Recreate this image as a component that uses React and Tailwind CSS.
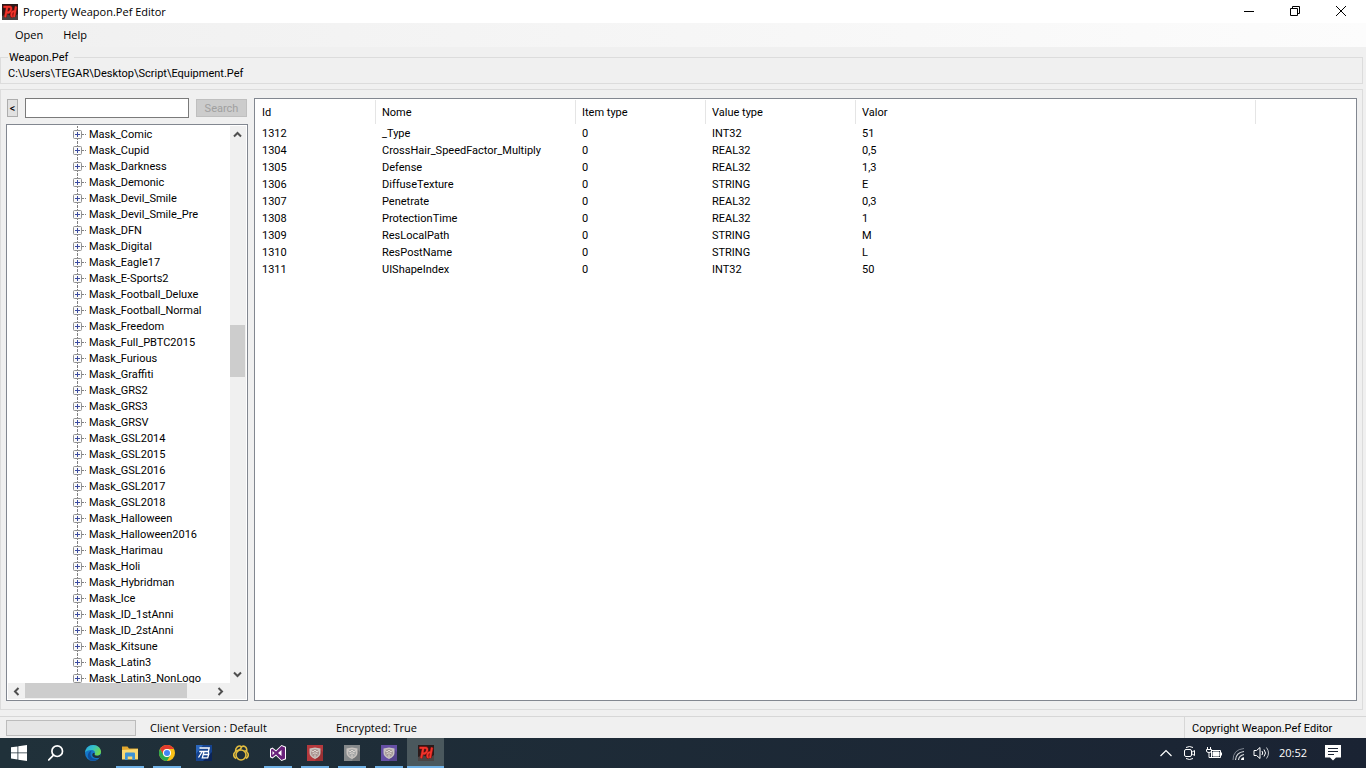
import { useState } from 'react';

const TREE_ITEMS = [
  'Mask_Comic', 'Mask_Cupid', 'Mask_Darkness', 'Mask_Demonic', 'Mask_Devil_Smile',
  'Mask_Devil_Smile_Pre', 'Mask_DFN', 'Mask_Digital', 'Mask_Eagle17', 'Mask_E-Sports2',
  'Mask_Football_Deluxe', 'Mask_Football_Normal', 'Mask_Freedom', 'Mask_Full_PBTC2015',
  'Mask_Furious', 'Mask_Graffiti', 'Mask_GRS2', 'Mask_GRS3', 'Mask_GRSV', 'Mask_GSL2014',
  'Mask_GSL2015', 'Mask_GSL2016', 'Mask_GSL2017', 'Mask_GSL2018', 'Mask_Halloween',
  'Mask_Halloween2016', 'Mask_Harimau', 'Mask_Holi', 'Mask_Hybridman', 'Mask_Ice',
  'Mask_ID_1stAnni', 'Mask_ID_2stAnni', 'Mask_Kitsune', 'Mask_Latin3', 'Mask_Latin3_NonLogo',
];

const ROWS = [
  ['1312', '_Type', '0', 'INT32', '51'],
  ['1304', 'CrossHair_SpeedFactor_Multiply', '0', 'REAL32', '0,5'],
  ['1305', 'Defense', '0', 'REAL32', '1,3'],
  ['1306', 'DiffuseTexture', '0', 'STRING', 'E'],
  ['1307', 'Penetrate', '0', 'REAL32', '0,3'],
  ['1308', 'ProtectionTime', '0', 'REAL32', '1'],
  ['1309', 'ResLocalPath', '0', 'STRING', 'M'],
  ['1310', 'ResPostName', '0', 'STRING', 'L'],
  ['1311', 'UIShapeIndex', '0', 'INT32', '50'],
];

function AppLogo() {
  return (
    <svg viewBox="0 0 16 16" className="size-4 shrink-0">
      <rect width="16" height="16" fill="#2b1a1a" />
      <path d="M0 12l5-2 6 3 5-3v6H0z" fill="#4a4444" />
      <path d="M1.500 2.800h6q2 0 1.600 2.600T6.500 8.500H5M5.200 3.500L3.200 13.200M14 2.500l-2 10.500M12.500 7.500q-2.500-.5-3 2.300t1.200 2.700" fill="none" stroke="#8c1210" strokeWidth="3" />
      <path d="M1.500 2.800h6q2 0 1.600 2.600T6.500 8.500H5M5.200 3.500L3.200 13.200M14 2.500l-2 10.500M12.500 7.500q-2.500-.5-3 2.300t1.200 2.700" fill="none" stroke="#f0352c" strokeWidth="1.800" />
    </svg>
  );
}

function Chevron({ className }) {
  return (
    <svg viewBox="0 0 9 9" className={`size-[9px] ${className}`}>
      <path d="M1 6.500L4.500 3L8 6.500" fill="none" stroke="#505050" strokeWidth="2" />
    </svg>
  );
}

function TitleBar() {
  const btn = 'flex h-[21px] w-[46px] items-center justify-center hover:bg-black/10';
  return (
    <header className="flex h-[23px] shrink-0 bg-white pr-[2px]">
      <div className="flex flex-1 items-center gap-[5px] pl-[2px]">
        <AppLogo />
        <h1 className="text-[11px] leading-4">Property Weapon.Pef Editor</h1>
      </div>
      <button className={btn} aria-label="Minimize">
        <svg viewBox="0 0 10 10" className="size-[10px]"><path d="M0 5.500h10" stroke="#000" /></svg>
      </button>
      <button className={btn} aria-label="Restore">
        <svg viewBox="0 0 10 10" className="size-[10px]">
          <path d="M.5 2.500h7v7h-7zM2.500 2V.5h7v7H8" fill="none" stroke="#000" />
        </svg>
      </button>
      <button className={btn} aria-label="Close">
        <svg viewBox="0 0 10 10" className="size-[10px]"><path d="M0 0l10 10M10 0L0 10" stroke="#000" /></svg>
      </button>
    </header>
  );
}

function TreeView() {
  return (
    <div className="flex min-h-0 flex-1 flex-col border border-[#828790] bg-white p-px">
      <div className="flex min-h-0 flex-1">
        <ul className="min-w-0 flex-1 overflow-hidden pl-[65px]">
          {TREE_ITEMS.map((name) => (
            <li key={name} className="flex h-4 items-center">
              <button className="flex h-4 w-[9px] flex-col items-center" aria-label={`Expand ${name}`}>
                <span className="w-px flex-1 border-l border-dotted border-[#808080]" />
                <svg viewBox="0 0 9 9" className="size-[9px] shrink-0">
                  <rect x=".5" y=".5" width="8" height="8" rx="1" fill="#fafafa" stroke="#919191" />
                  <path d="M2 4.500h5M4.500 2v5" stroke="#3a4aa0" />
                </svg>
                <span className="w-px flex-1 border-l border-dotted border-[#808080]" />
              </button>
              <span className="w-[4px] border-t border-dotted border-[#808080]" />
              <span className="pt-[2px] pl-[3px] whitespace-nowrap">{name}</span>
            </li>
          ))}
        </ul>
        <div className="flex w-[15px] flex-col items-center bg-[#f0f0f0]">
          <button className="flex h-[17px] w-full items-center justify-center" aria-label="Scroll up"><Chevron /></button>
          <div className="flex w-full flex-1 flex-col">
            <div className="grow-[182]" />
            <div className="h-[52px] bg-[#cdcdcd]" />
            <div className="grow-[288]" />
          </div>
          <button className="flex h-[17px] w-full items-center justify-center" aria-label="Scroll down"><Chevron className="rotate-180" /></button>
        </div>
        <div className="w-px bg-[#f0f0f0]" />
      </div>
      <div className="flex h-4 shrink-0 items-stretch bg-[#f0f0f0]">
        <button className="flex w-[17px] items-center justify-center" aria-label="Scroll left"><Chevron className="-rotate-90" /></button>
        <div className="flex-1"><div className="h-[15px] w-[162px] bg-[#cdcdcd]" /></div>
        <button className="flex w-[17px] items-center justify-center" aria-label="Scroll right"><Chevron className="rotate-90" /></button>
        <div className="w-[17px]" />
      </div>
    </div>
  );
}

function PropertyTable() {
  return (
    <div className="min-w-0 flex-1 border border-[#828790] bg-white p-px">
      <table className="w-full table-fixed border-separate border-spacing-0 text-left">
        <colgroup>
          <col className="w-[120px]" />
          <col className="w-[200px]" />
          <col className="w-[130px]" />
          <col className="w-[150px]" />
          <col className="w-[400px]" />
          <col />
        </colgroup>
        <thead>
          <tr className="h-6">
            {['Id', 'Nome', 'Item type', 'Value type', 'Valor'].map((h) => (
              <th key={h} className="border-r border-[#e5e5e5] p-0 pt-[2px] pl-[6px] font-normal">{h}</th>
            ))}
            <td />
          </tr>
        </thead>
        <tbody>
          {ROWS.map((row) => (
            <tr key={row[0]} className="h-[17px]">
              {row.map((cell, i) => (
                <td key={i} className="p-0 pt-[2px] pl-[6px] whitespace-nowrap">{cell}</td>
              ))}
              <td />
            </tr>
          ))}
        </tbody>
      </table>
    </div>
  );
}

function ShieldIcon({ bg, crest }) {
  return (
    <svg viewBox="0 0 16 16" className="size-4">
      <rect width="16" height="16" fill={bg} />
      <path d="M13 4l3 3v9H8z" fill="#000" opacity=".15" />
      <path d="M8 2.500l5.500 1v4.500q0 3.500-5.500 6Q2.500 11.500 2.500 8V3.500z" fill="#c9c4c0" />
      <path d="M8 4l4 1v3q0 2.500-4 4.500-4-2-4-4.500V5z" fill={crest} />
      <path d="M4 5.500l2 1.500 2-2 2 2 2-1.500M5.500 9l1.500-1h2l1.500 1M8 9.500v2.500" fill="none" stroke="#e4ded8" strokeWidth=".9" />
    </svg>
  );
}

const TASKS = [
  {
    name: 'Start',
    icon: (
      <svg viewBox="0 0 16 16" className="size-4" fill="#fff">
        <path d="M0 2.300l6.500-.9v6.100H0zM7.300 1.300L16 0v7.500H7.300zM0 8.300h6.500v6.200L0 13.600zM7.300 8.300H16V16l-8.700-1.300z" />
      </svg>
    ),
  },
  {
    name: 'Search',
    icon: (
      <svg viewBox="0 0 16 16" className="size-4" fill="none" stroke="#fff" strokeWidth="1.700">
        <circle cx="9.200" cy="6.200" r="5.300" />
        <path d="M5.500 10.200L.2 15.500" />
      </svg>
    ),
  },
  {
    name: 'Microsoft Edge',
    icon: (
      <svg viewBox="0 0 16 16" className="size-4">
        <defs>
          <linearGradient id="edge-top" x1="0" y1="0" x2="1" y2=".5">
            <stop offset="0" stopColor="#2aa5dc" />
            <stop offset=".5" stopColor="#35c1c8" />
            <stop offset="1" stopColor="#6fd84f" />
          </linearGradient>
        </defs>
        <circle cx="8" cy="8" r="8" fill="#1476c8" />
        <path d="M.1 7.500C.6 3 4 0 8.100 0 12.700 0 16 3.400 16 6.800c0 2.400-1.700 4-4 4-2 0-2.800-.8-2.400-1.500C11 7 9 4.900 6.300 4.900 3.200 4.900.6 6.200.1 7.500z" fill="url(#edge-top)" />
        <path d="M5.500 8.500c-.6 3.500 2.700 6.500 7.200 5.200C9 17.500 3.500 16 2.800 11.500 2.400 8.500 4.500 6 6.500 6c-.6.700-.9 1.500-1 2.500z" fill="#0f4f9e" />
        <path d="M9.600 9.300c-.4.700.4 1.500 2.400 1.500 1.500 0 3-.7 3.600-1.800.3 1.300-.3 2.600-1.300 3.700C10.500 14 7 12 7.300 9.500c.1-1 .8-1.600 1.400-1.600.9 0 1.300.6.900 1.400z" fill="#20303a" />
      </svg>
    ),
  },
  {
    name: 'File Explorer',
    open: true,
    icon: (
      <svg viewBox="0 0 16 16" className="size-4">
        <path d="M0 1.500h5.500L7 3.500h9V6H0z" fill="#e2a72e" />
        <path d="M0 5l16-1v10.500H0z" fill="#fbd971" />
        <path d="M3 8.500q0-1 1-1h8q1 0 1 1V15h-2.700v-3.500H5.700V15H3z" fill="#3d93d5" />
      </svg>
    ),
  },
  {
    name: 'Google Chrome',
    open: true,
    icon: (
      <svg viewBox="0 0 16 16" className="size-4">
        <circle cx="8" cy="8" r="8" fill="#fbc116" />
        <path d="M1.070 4A8 8 0 0 1 14.930 4H8a4 4 0 0 0-3.460 6z" fill="#e33b2e" />
        <path d="M1.070 4l3.470 6A4 4 0 0 0 8 12l3.460-2L8 16A8 8 0 0 1 1.070 4z" fill="#2da94f" />
        <circle cx="8" cy="8" r="4" fill="#fff" />
        <circle cx="8" cy="8" r="3" fill="#4285f4" />
      </svg>
    ),
  },
  {
    name: 'Point Blank',
    icon: (
      <svg viewBox="0 0 16 16" className="size-4">
        <rect width="16" height="16" fill="#15438f" />
        <path d="M0 0h7L0 9z" fill="#2b67bd" />
        <path d="M16 7v9H7z" fill="#0b2459" />
        <path d="M3.500 3h9.700l-.8 3.500H3.200M6.300 6.500L2.500 12.500M8 6.500l-1.700 6.300h5.400l1-3.300H7.200M12.400 6.500l.3 3" fill="none" stroke="#fff" strokeWidth="1.300" />
      </svg>
    ),
  },
  {
    name: 'Navicat',
    icon: (
      <svg viewBox="0 0 16 16" className="size-4" fill="none" stroke="#e3bd3f" strokeWidth="1.600">
        <circle cx="8" cy="10" r="5" />
        <path d="M3 13.500Q0 12 1 8.500 2 6 5 5.200 8 4.500 8.500 1.800 6.500.200 4.200 2 2.200 3.800 2.800 6.500M13 13.500q3-1.500 2-5Q14 6 11.500 5.500M8.500 1.800Q11 .200 13 2.500q1.300 2 .300 4.500" />
      </svg>
    ),
  },
  {
    name: 'Visual Studio',
    open: true,
    icon: (
      <svg viewBox="0 0 16 16" className="size-4">
        <path d="M11.500 0L16 1.800v12.400L11.500 16 6 10.700 2.500 13.500 0 12.300V3.700l2.500-1.200L6 5.300z" fill="#fff" />
        <path d="M11.500 1L15 2.500v11L11.500 15 6 9.500l-3.500 2.800L1 11.500v-7l1.500-.8L6 6.500zM11.500 5L8 8l3.500 3zM2.500 6v4l2-2z" fill="#68217a" fillRule="evenodd" />
      </svg>
    ),
  },
  { name: 'Launcher', open: true, icon: <ShieldIcon bg="#b5393d" crest="#a8928f" /> },
  { name: 'Server', open: true, icon: <ShieldIcon bg="#85898b" crest="#a3a5a5" /> },
  { name: 'Auth', open: true, icon: <ShieldIcon bg="#6650a5" crest="#a59a98" /> },
  { name: 'Property Weapon.Pef Editor', open: true, active: true, icon: <AppLogo /> },
];

function Taskbar() {
  return (
    <footer className="flex h-[30px] shrink-0 justify-between bg-linear-to-r from-[#20313a] to-[#1a2333] text-white">
      <nav className="flex" aria-label="Taskbar">
        {TASKS.map(({ name, open, active, icon }) => (
          <button
            key={name}
            aria-label={name}
            className={`flex w-[37px] flex-col items-center pt-[2px] ${active ? 'bg-[#4a585d]' : 'hover:bg-white/10'}`}
          >
            <span className="flex flex-1 items-center">{icon}</span>
            <span className={`h-[2px] ${open ? 'bg-[#6fb1e6]' : ''} ${active ? 'w-full' : 'w-7'}`} />
          </button>
        ))}
      </nav>
      <div className="flex items-center pr-[25px]">
        <button className="mr-[12px]" aria-label="Show hidden icons">
          <svg viewBox="0 0 12 8" className="h-2 w-3"><path d="M.5 7L6 1.500 11.500 7" fill="none" stroke="#fff" strokeWidth="1.200" /></svg>
        </button>
        <button className="mr-[10px]" aria-label="Meet Now">
          <svg viewBox="0 0 12 16" className="h-4 w-3" fill="none" stroke="#fff">
            <rect x=".5" y="4.500" width="7" height="7" rx="1.500" />
            <path d="M7.500 7.500l3-2v5l-3-2M2 2.500Q5.500.5 9 2.500M2 13.500q3.500 2 7 0" />
          </svg>
        </button>
        <button className="mr-[10px]" aria-label="Battery">
          <svg viewBox="0 0 16 12" className="h-3 w-4" fill="none" stroke="#fff">
            <path d="M5.500 3.500h9v7h-9zM15.500 5.500v3" />
            <path d="M7 5h6v4H7z" fill="#fff" />
            <path d="M1.500 0v2.500M4.500 0v2.500M.5 2.500h5v1.500q0 1.500-2.500 1.500T.5 4zM3 5.500v5h3" />
          </svg>
        </button>
        <button className="mr-[8px]" aria-label="Network">
          <svg viewBox="0 0 13 13" className="size-[13px]" fill="none">
            <path d="M1 13Q1 2.500 12 1.500" stroke="#7d8590" />
            <path d="M3.500 13Q4 5.500 12 4.500M6.500 13Q7 8.500 12 7.500" stroke="#d5d8dc" strokeWidth="1.200" />
            <path d="M9 13q0-2.500 3-2.800V13z" fill="#fff" />
          </svg>
        </button>
        <button className="mr-[9px]" aria-label="Volume">
          <svg viewBox="0 0 17 14" className="h-[14px] w-[17px]" fill="none" stroke="#fff">
            <path d="M1 4.500h2.500L7 1.500v11L3.500 9.500H1z" />
            <path d="M9 5q1.500 2 0 4M11 3.500q3 3.500 0 7" />
            <path d="M13.500 1.500q4 5.500 0 11" stroke="#c3c7cc" />
          </svg>
        </button>
        <time className="mr-[18px] text-[11px] leading-4">20:52</time>
        <button aria-label="Notifications">
          <svg viewBox="0 0 16 16" className="size-4">
            <path d="M0 0h16v12.500h-5L8 15.500l-3-3H0z" fill="#fff" />
            <path d="M3 3.500h10M3 6.500h10M3 9.500h6" stroke="#1a2333" />
          </svg>
        </button>
      </div>
    </footer>
  );
}

export default function App() {
  const [query, setQuery] = useState('');

  return (
    <div className="flex h-screen flex-col overflow-hidden bg-[#f0f0f0] font-['Open_Sans','Noto_Sans',sans-serif] text-black">
      <TitleBar />
      <nav className="flex h-6 shrink-0 items-center bg-linear-to-r from-[#f0f0f0] to-[#fcfcfc] pl-[5px] text-[11px] leading-4" aria-label="Menu">
        <button className="px-[10px]">Open</button>
        <button className="px-[10px]">Help</button>
      </nav>
      <main className="flex min-h-0 flex-1 flex-col gap-[5px] pt-[2px] pr-[3px] pb-[6px] font-[Roboto,Arial,sans-serif] text-[11px] leading-[14px]">
        <fieldset className="shrink-0 border border-[#dcdcdc] pb-[2px] pl-[7px]">
          <legend className="pt-[2px] pr-[6px] pl-px">Weapon.Pef</legend>
          <p className="pt-[2px]">C:\Users\TEGAR\Desktop\Script\Equipment.Pef</p>
        </fieldset>
        <section className="flex min-h-0 flex-1 gap-[6px] border border-[#dcdcdc] pt-[8px] pr-[5px] pb-[8px] pl-[5px]">
          <aside className="flex w-[242px] flex-col gap-[6px]">
            <div className="flex h-5 items-center px-px">
              <button className="h-[18px] w-[11px] border border-[#adadad] bg-[#e1e1e1] pt-[2px]">&lt;</button>
              <input
                type="text"
                aria-label="Search"
                value={query}
                onChange={(e) => setQuery(e.target.value)}
                className="ml-[7px] h-5 min-w-0 flex-1 border border-[#7a7a7a] bg-white px-1 outline-none"
              />
              <button disabled className="ml-[7px] h-[18px] w-[51px] border border-[#bfbfbf] bg-[#cccccc] pt-[2px] text-[#a0a0a0]">Search</button>
            </div>
            <TreeView />
          </aside>
          <PropertyTable />
        </section>
      </main>
      <div className="flex h-[22px] shrink-0 items-center border-t border-[#d7d7d7] pl-[6px] text-[11px] leading-4">
        <div className="h-4 w-[130px] border border-[#bcbcbc] bg-[#e6e6e6]" role="progressbar" aria-label="Loading" />
        <span className="ml-[14px] w-[186px]">Client Version : Default</span>
        <span className="flex-1">Encrypted: True</span>
        <div className="flex h-full w-[182px] items-center border-l border-[#d7d7d7] pt-[3px] pl-[7px] font-[Roboto,Arial,sans-serif]">
          Copyright Weapon.Pef Editor
        </div>
      </div>
      <Taskbar />
    </div>
  );
}
